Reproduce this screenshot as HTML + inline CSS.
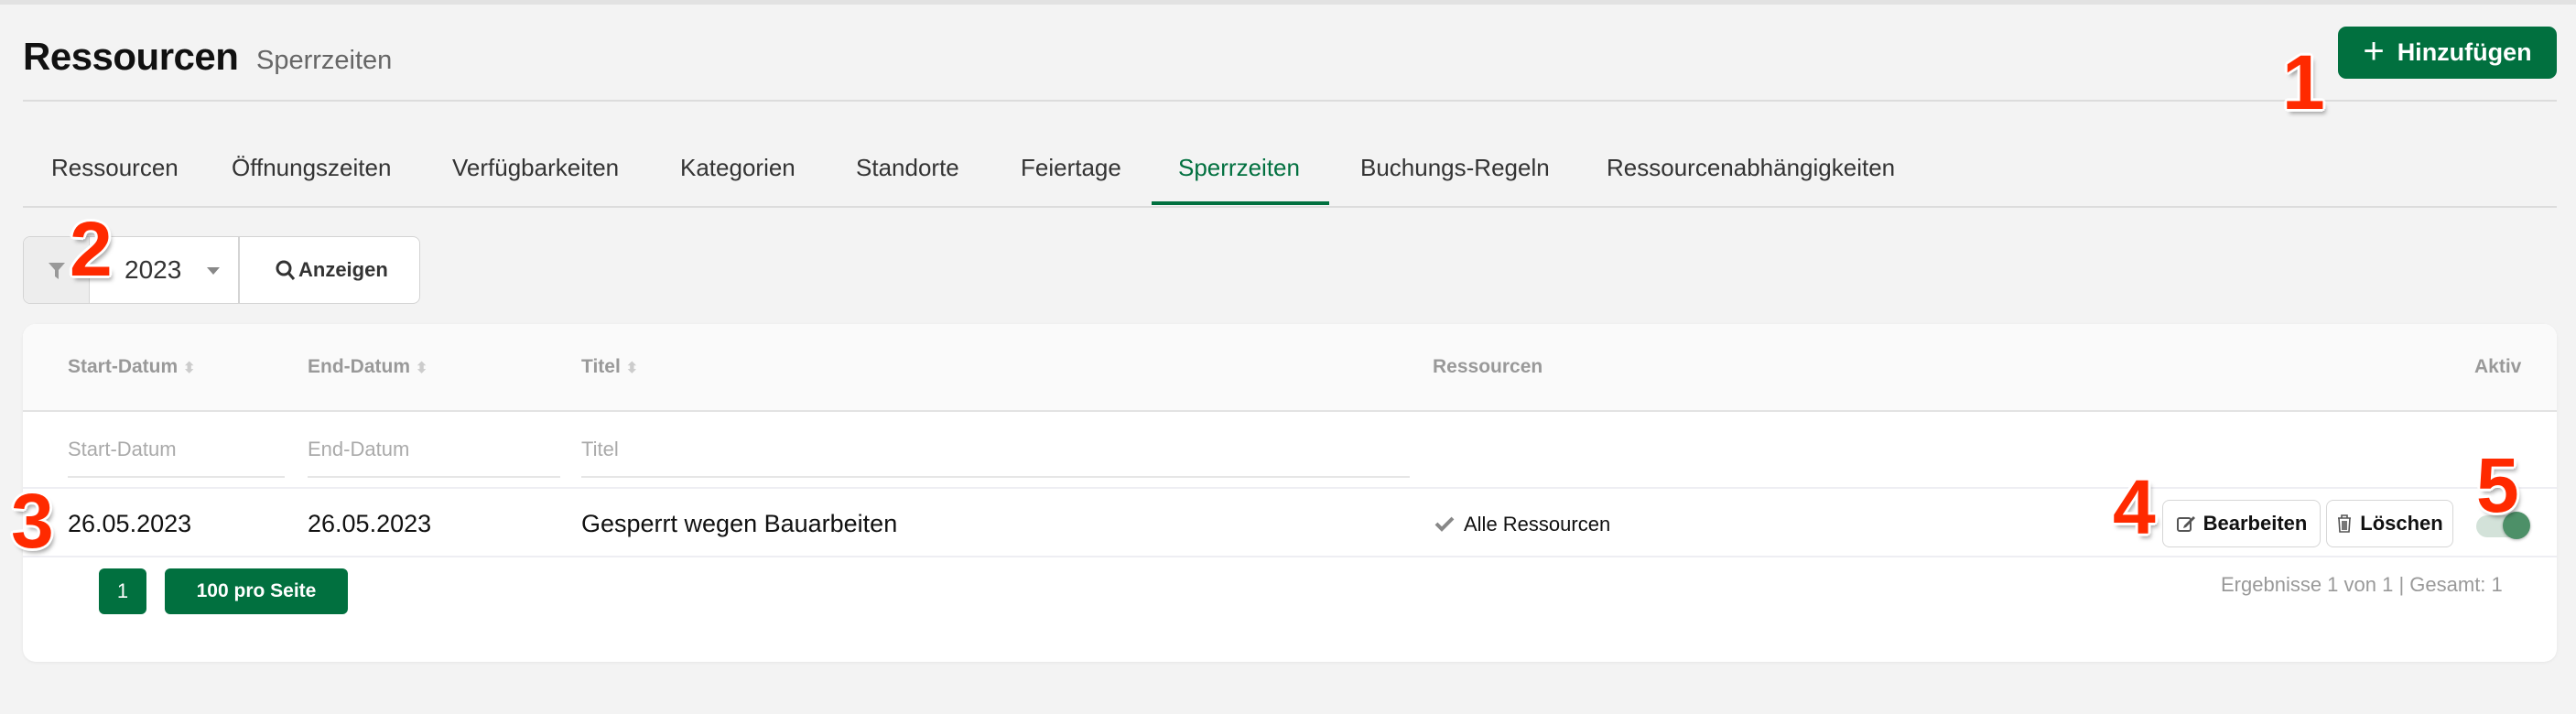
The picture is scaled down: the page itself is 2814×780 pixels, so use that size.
<!DOCTYPE html>
<html><head><meta charset="utf-8"><style>
*{margin:0;padding:0;box-sizing:border-box}
body{width:2814px;height:780px;background:#f3f3f3;font-family:"Liberation Sans",sans-serif;position:relative;overflow:hidden;color:#222}
.a{position:absolute;white-space:nowrap}
.topl{left:0;top:0;width:2814px;height:5px;background:#e2e2e2}
.tab{top:168px;font-size:26px;color:#333}
.hd{top:389px;font-size:21px;font-weight:bold;color:#999}
.ph{top:478px;font-size:22px;color:#aaa}
.ul{top:520px;height:2px;background:#e6e6e6}
.cell{top:557px;font-size:27px;color:#111}
.num{font-size:84px;font-weight:bold;color:#ff2a00;line-height:1;
text-shadow:3px 0 #fff,-3px 0 #fff,0 3px #fff,0 -3px #fff,2px 2px #fff,-2px -2px #fff,2px -2px #fff,-2px 2px #fff,3px 5px 5px rgba(0,0,0,.35)}
.btn{background:#fff;border:1px solid #d6d6d6;border-radius:8px;font-size:22px;font-weight:bold;display:flex;align-items:center;justify-content:center;gap:8px;color:#111}
.green{background:#01703f;color:#fff;border-radius:6px;font-weight:bold;display:flex;align-items:center;justify-content:center}
</style></head><body>
<div class="a topl"></div>
<div class="a" style="left:25px;top:38px;font-size:42px;font-weight:bold;color:#111;letter-spacing:-0.5px">Ressourcen</div>
<div class="a" style="left:280px;top:50px;font-size:29px;color:#666">Sperrzeiten</div>
<div class="a" style="left:25px;top:109px;width:2768px;height:2px;background:#dcdcdc"></div>
<div class="a green" style="left:2554px;top:29px;width:239px;height:57px;border-radius:9px;font-size:27px;gap:14px"><span style="font-weight:normal;font-size:40px;line-height:1;margin-top:-4px">+</span>Hinzufügen</div>

<div class="a tab" style="left:56px">Ressourcen</div>
<div class="a tab" style="left:253px">Öffnungszeiten</div>
<div class="a tab" style="left:494px">Verfügbarkeiten</div>
<div class="a tab" style="left:743px">Kategorien</div>
<div class="a tab" style="left:935px">Standorte</div>
<div class="a tab" style="left:1115px">Feiertage</div>
<div class="a tab" style="left:1287px;color:#01703f">Sperrzeiten</div>
<div class="a tab" style="left:1486px">Buchungs-Regeln</div>
<div class="a tab" style="left:1755px">Ressourcenabhängigkeiten</div>
<div class="a" style="left:25px;top:225px;width:2768px;height:2px;background:#dcdcdc"></div>
<div class="a" style="left:1258px;top:220px;width:194px;height:4px;background:#01703f"></div>

<div class="a" style="left:25px;top:258px;width:434px;height:74px;border:1px solid #d4d4d4;border-radius:8px;background:#fff;overflow:hidden">
 <div class="a" style="left:0;top:0;width:72px;height:72px;background:#ededed;border-right:1px solid #d4d4d4"></div>
 <svg class="a" style="left:26px;top:26px" width="20" height="22" viewBox="0 0 20 22"><path d="M1 2h18l-7 8v10l-4-3v-7z" fill="#999"/></svg>
 <div class="a" style="left:110px;top:20px;font-size:28px;color:#333">2023</div>
 <svg class="a" style="left:200px;top:33px" width="14" height="9"><path d="M0 0h14l-7 8z" fill="#888"/></svg>
 <div class="a" style="left:234px;top:0;width:2px;height:72px;background:#d4d4d4"></div>
 <svg class="a" style="left:275px;top:25px" width="22" height="24" viewBox="0 0 22 24"><circle cx="9" cy="9" r="7" stroke="#333" stroke-width="3" fill="none"/><path d="M14 14l6 7" stroke="#333" stroke-width="3"/></svg>
 <div class="a" style="left:300px;top:23px;font-size:22px;font-weight:bold;color:#333">Anzeigen</div>
</div>

<div class="a" style="left:25px;top:354px;width:2768px;height:369px;background:#fff;border-radius:14px;box-shadow:0 1px 3px rgba(0,0,0,.06);overflow:hidden">
 <div class="a" style="left:0;top:0;width:2768px;height:96px;background:#fafafa;border-bottom:2px solid #e3e3e3"></div>
 <div class="a" style="left:0;top:178px;width:2768px;height:2px;background:#eeeef3"></div>
 <div class="a" style="left:0;top:253px;width:2768px;height:2px;background:#eeeef3"></div>
</div>
<div class="a hd" style="left:74px">Start-Datum <span style="color:#ccc;font-size:16px">⬍</span></div>
<div class="a hd" style="left:336px">End-Datum <span style="color:#ccc;font-size:16px">⬍</span></div>
<div class="a hd" style="left:635px">Titel <span style="color:#ccc;font-size:16px">⬍</span></div>
<div class="a hd" style="left:1565px">Ressourcen</div>
<div class="a hd" style="left:2703px">Aktiv</div>

<div class="a ph" style="left:74px">Start-Datum</div>
<div class="a ph" style="left:336px">End-Datum</div>
<div class="a ph" style="left:635px">Titel</div>
<div class="a ul" style="left:74px;width:237px"></div>
<div class="a ul" style="left:336px;width:276px"></div>
<div class="a ul" style="left:635px;width:905px"></div>

<div class="a cell" style="left:74px">26.05.2023</div>
<div class="a cell" style="left:336px">26.05.2023</div>
<div class="a cell" style="left:635px">Gesperrt wegen Bauarbeiten</div>
<svg class="a" style="left:1567px;top:563px" width="22" height="18" viewBox="0 0 22 18"><path d="M2 9l6 6L20 3" stroke="#888" stroke-width="4" fill="none"/></svg>
<div class="a" style="left:1599px;top:560px;font-size:22px;color:#111">Alle Ressourcen</div>

<div class="a btn" style="left:2362px;top:546px;width:173px;height:52px"><svg width="22" height="22" viewBox="0 0 22 22"><rect x="2" y="5" width="14" height="14" rx="2" stroke="#555" stroke-width="2" fill="none"/><path d="M9 13l10-10 2 2-10 10-3 1z" fill="#555"/></svg>Bearbeiten</div>
<div class="a btn" style="left:2541px;top:546px;width:139px;height:52px"><svg width="18" height="22" viewBox="0 0 18 22"><path d="M2 5h14M6 5V2h6v3M3 5l1 15h10l1-15M7 8v10M9 8v10M11 8v10" stroke="#555" stroke-width="1.6" fill="none"/></svg>Löschen</div>
<div class="a" style="left:2705px;top:563px;width:57px;height:24px;border-radius:12px;background:#d3e2d9"></div>
<div class="a" style="left:2734px;top:559px;width:30px;height:30px;border-radius:50%;background:#4d9068;box-shadow:0 1px 3px rgba(0,0,0,.3)"></div>

<div class="a green" style="left:108px;top:621px;width:52px;height:50px;font-size:22px;font-weight:normal">1</div>
<div class="a green" style="left:180px;top:621px;width:200px;height:50px;font-size:21px">100 pro Seite</div>
<div class="a" style="left:2426px;top:626px;font-size:22px;color:#999">Ergebnisse 1 von 1 | Gesamt: 1</div>

<div class="a num" style="left:2493px;top:48px">1</div>
<div class="a num" style="left:76px;top:230px">2</div>
<div class="a num" style="left:12px;top:527px">3</div>
<div class="a num" style="left:2308px;top:512px">4</div>
<div class="a num" style="left:2705px;top:488px">5</div>
</body></html>
